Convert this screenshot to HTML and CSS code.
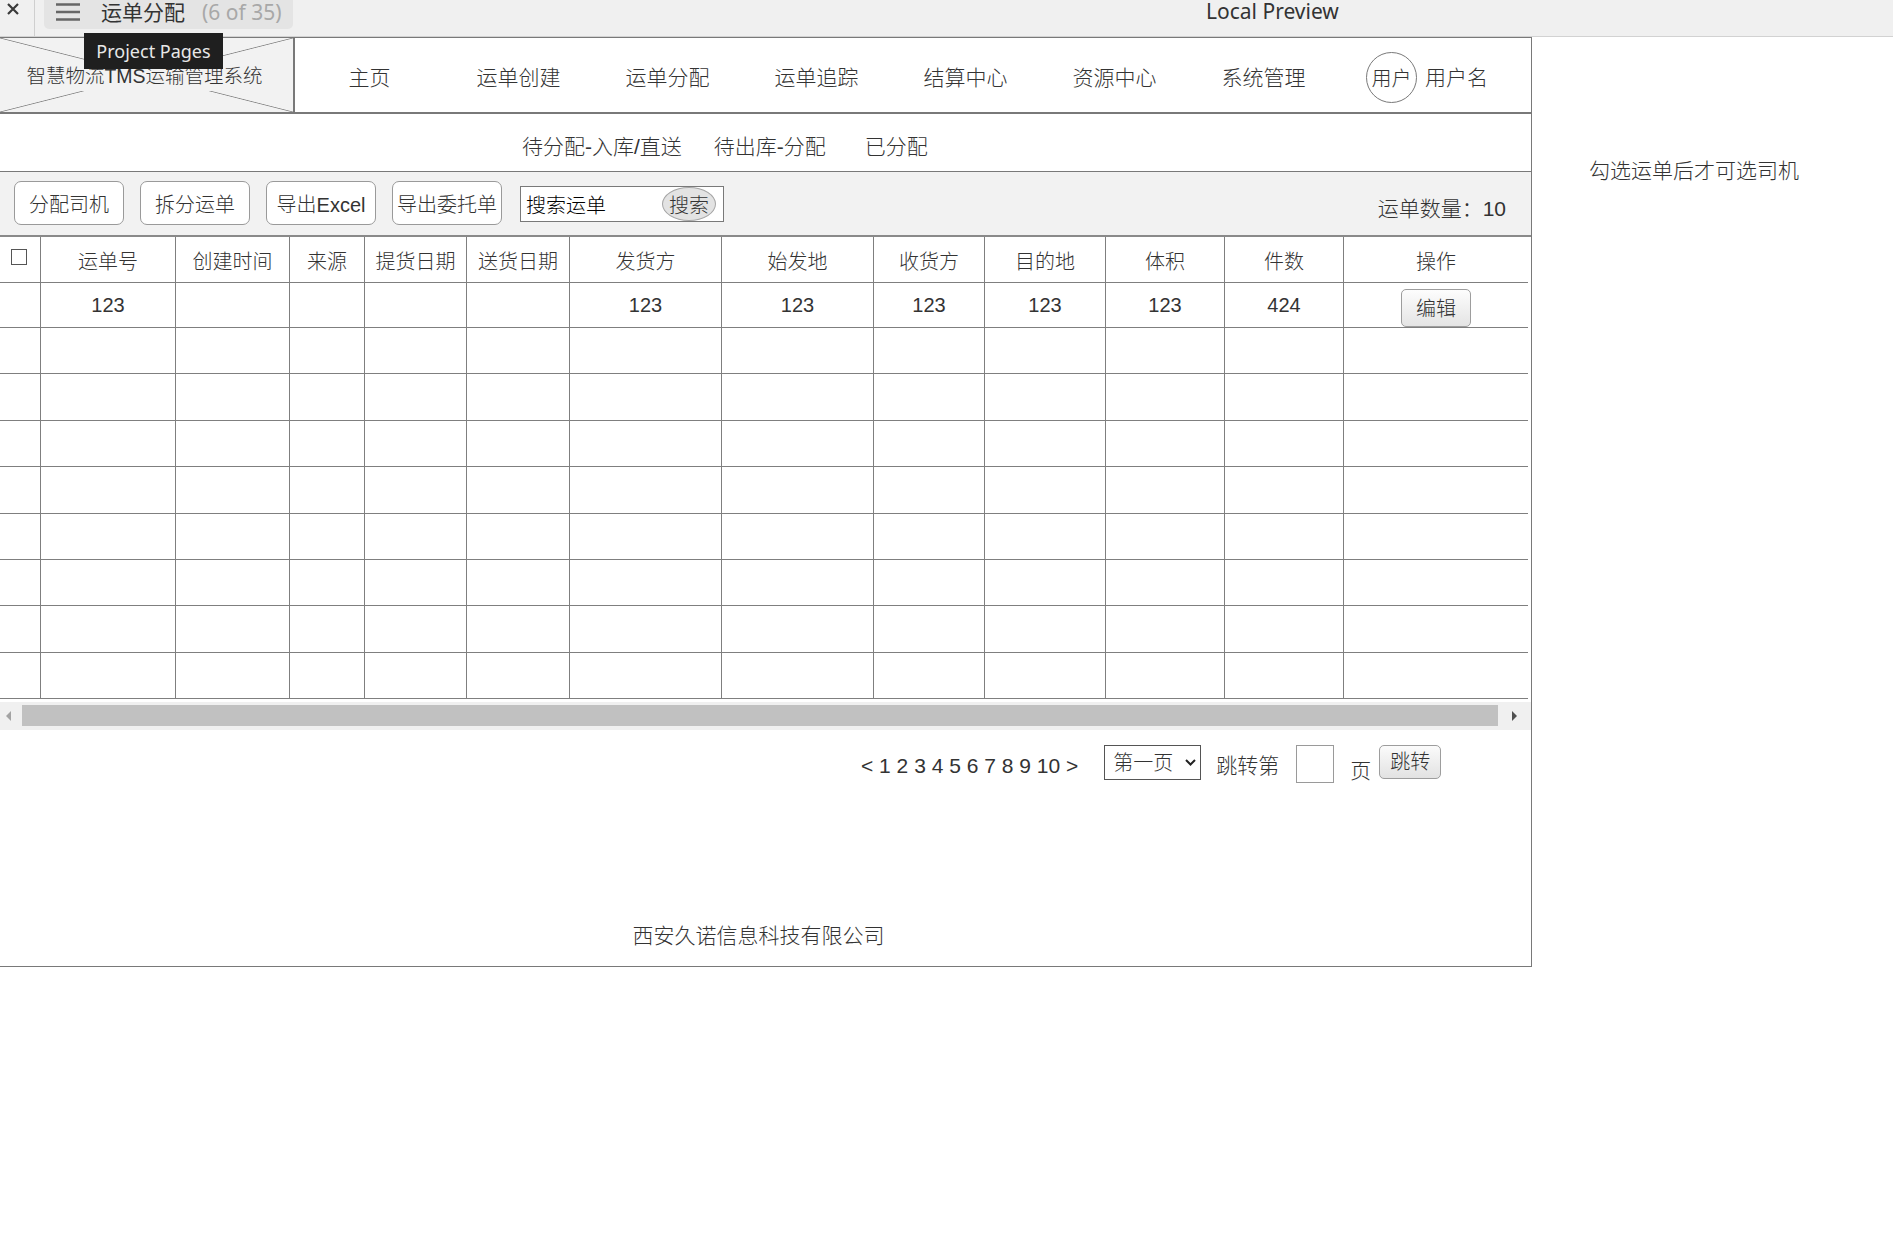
FILE: index.html
```html
<!DOCTYPE html>
<html lang="zh-CN">
<head>
<meta charset="utf-8">
<title>运单分配</title>
<link rel="stylesheet" href="styles.css">
</head>
<body>
<div class="topbar">
  <div class="tb-close">
    <svg width="12" height="12" viewBox="0 0 12 12"><path d="M1 1 L11 11 M11 1 L1 11" stroke="#3a3a3a" stroke-width="2.2" fill="none"/></svg>
  </div>
  <div class="tb-pill">
    <svg class="tb-menu" width="24" height="20" viewBox="0 0 24 20"><path d="M0 2.5 H24 M0 10 H24 M0 17.5 H24" stroke="#666" stroke-width="2.6" fill="none"/></svg>
    <span class="tb-title">运单分配</span>
    <span class="tb-count">(6 of 35)</span>
  </div>
  <span class="tb-preview">Local Preview</span>
</div>

<div class="tooltip">Project Pages</div>

<div class="page">
  <div class="frame">
    <header class="header">
      <div class="logo"><span class="logo-label">智慧物流TMS运输管理系统</span></div>
      <nav class="nav">
        <span class="nav-item">主页</span>
        <span class="nav-item">运单创建</span>
        <span class="nav-item">运单分配</span>
        <span class="nav-item">运单追踪</span>
        <span class="nav-item">结算中心</span>
        <span class="nav-item">资源中心</span>
        <span class="nav-item">系统管理</span>
        <span class="avatar">用户</span>
        <span class="username">用户名</span>
      </nav>
    </header>

    <div class="subtabs">
      <span class="subtab">待分配-入库/直送</span>
      <span class="subtab">待出库-分配</span>
      <span class="subtab subtab-last">已分配</span>
    </div>

    <div class="toolbar">
      <span class="btn">分配司机</span>
      <span class="btn">拆分运单</span>
      <span class="btn">导出Excel</span>
      <span class="btn">导出委托单</span>
      <div class="search">
        <span class="search-text">搜索运单</span>
        <span class="search-btn">搜索</span>
      </div>
      <span class="count">运单数量：10</span>
    </div>

    <div class="table-wrap">
      <table class="grid">
        <colgroup>
          <col class="c1"><col class="c2"><col class="c3"><col class="c4"><col class="c5"><col class="c6"><col class="c7"><col class="c8"><col class="c9"><col class="c10"><col class="c11"><col class="c12"><col class="c13">
        </colgroup>
        <thead>
          <tr>
            <th class="chk"><span class="checkbox"></span></th>
            <th>运单号</th><th>创建时间</th><th>来源</th><th>提货日期</th><th>送货日期</th><th>发货方</th><th>始发地</th><th>收货方</th><th>目的地</th><th>体积</th><th>件数</th><th class="last">操作</th>
          </tr>
        </thead>
        <tbody>
          <tr class="first">
            <td></td><td>123</td><td></td><td></td><td></td><td></td><td>123</td><td>123</td><td>123</td><td>123</td><td>123</td><td>424</td><td class="last op"><span class="edit-btn">编辑</span></td>
          </tr>
          <tr><td></td><td></td><td></td><td></td><td></td><td></td><td></td><td></td><td></td><td></td><td></td><td></td><td class="last"></td></tr>
          <tr><td></td><td></td><td></td><td></td><td></td><td></td><td></td><td></td><td></td><td></td><td></td><td></td><td class="last"></td></tr>
          <tr><td></td><td></td><td></td><td></td><td></td><td></td><td></td><td></td><td></td><td></td><td></td><td></td><td class="last"></td></tr>
          <tr><td></td><td></td><td></td><td></td><td></td><td></td><td></td><td></td><td></td><td></td><td></td><td></td><td class="last"></td></tr>
          <tr><td></td><td></td><td></td><td></td><td></td><td></td><td></td><td></td><td></td><td></td><td></td><td></td><td class="last"></td></tr>
          <tr><td></td><td></td><td></td><td></td><td></td><td></td><td></td><td></td><td></td><td></td><td></td><td></td><td class="last"></td></tr>
          <tr><td></td><td></td><td></td><td></td><td></td><td></td><td></td><td></td><td></td><td></td><td></td><td></td><td class="last"></td></tr>
          <tr><td></td><td></td><td></td><td></td><td></td><td></td><td></td><td></td><td></td><td></td><td></td><td></td><td class="last"></td></tr>
        </tbody>
      </table>
      <div class="hscroll">
        <span class="arrow-l"><span class="tri-l"></span></span>
        <span class="thumb"></span>
        <span class="arrow-r"><span class="tri-r"></span></span>
      </div>
    </div>

    <div class="pager">
      <span class="pages">&lt; 1 2 3 4 5 6 7 8 9 10 &gt;</span>
      <span class="select">第一页<svg class="chev" width="11" height="7" viewBox="0 0 11 7"><path d="M1 1 L5.5 5.5 L10 1" stroke="#222" stroke-width="2" fill="none"/></svg></span>
      <span class="jump-label">跳转第</span>
      <span class="jump-input"></span>
      <span class="jump-unit">页</span>
      <span class="jump-btn">跳转</span>
    </div>

    <footer class="footer">西安久诺信息科技有限公司</footer>
  </div>
  <div class="hint">勾选运单后才可选司机</div>
</div>
</body>
</html>
```

FILE: styles.css
```css
* { box-sizing: border-box; }
html, body { margin: 0; padding: 0; background: #fff; }
body {
  font-family: "Liberation Sans", "Noto Sans CJK SC", sans-serif;
  font-weight: 300;
  color: #333;
  width: 1893px;
  height: 1245px;
  overflow: hidden;
  position: relative;
}

/* ---------- top bar ---------- */
.topbar {
  display: flex;
  align-items: flex-start;
  height: 37px;
  background: #f0f0f0;
  border-bottom: 1px solid #d2d2d2;
  font-family: "Noto Sans", "Noto Sans CJK SC", sans-serif;
  font-weight: 400;
}
.tb-close {
  width: 35px;
  height: 36px;
  border-right: 1px solid #cfcfcf;
  padding: 3px 0 0 7px;
}
.tb-close svg { display: block; }
.tb-pill {
  margin-left: 9px;
  width: 249px;
  height: 29px;
  background: #e4e4e4;
  border-radius: 0 0 5px 5px;
  display: flex;
  align-items: flex-start;
  padding-left: 12px;
}
.tb-menu { margin-top: 2px; display: block; }
.tb-title { margin-left: 21px; font-size: 21px; line-height: 25px; color: #333; }
.tb-count { margin-left: 17px; font-size: 21px; line-height: 25px; color: #a8a8a8; }
.tb-preview { margin-left: 913px; font-size: 21px; line-height: 23px; color: #333; }

.tooltip {
  position: absolute;
  left: 84px;
  top: 33px;
  width: 139px;
  height: 36px;
  background: #1f1f1f;
  color: #e8e8e8;
  font-family: "Noto Sans", sans-serif;
  font-weight: 400;
  font-size: 18px;
  line-height: 36px;
  text-align: center;
  z-index: 5;
}

/* ---------- page frame ---------- */
.page { display: flex; align-items: flex-start; }
.frame {
  width: 1532px;
  flex: none;
  border-top: 1px solid #797979;
  border-right: 1px solid #797979;
  border-bottom: 1px solid #797979;
}

.header {
  display: flex;
  height: 76px;
  border-bottom: 2px solid #797979;
}
.logo {
  width: 295px;
  flex: none;
  border-right: 2px solid #797979;
  background:
    linear-gradient(to top right, transparent calc(50% - 0.8px), #8a8a8a 50%, transparent calc(50% + 0.8px)),
    linear-gradient(to bottom right, transparent calc(50% - 0.8px), #8a8a8a 50%, transparent calc(50% + 0.8px)),
    #f2f2f2;
  display: flex;
  align-items: center;
  justify-content: center;
  padding-right: 4px;
}
.logo-label {
  background: #f2f2f2;
  font-size: 19.5px;
  line-height: 30px;
  color: #333;
  white-space: nowrap;
  margin-top: 1px;
}
.nav {
  display: flex;
  align-items: center;
  flex: 1;
}
.nav-item {
  width: 149px;
  text-align: center;
  font-size: 21px;
  line-height: 28px;
  padding-top: 5px;
  color: #333;
}
.avatar {
  margin-left: 28px;
  margin-top: 4px;
  width: 51px;
  height: 51px;
  border: 1px solid #797979;
  border-radius: 50%;
  display: flex;
  align-items: center;
  justify-content: center;
  font-size: 20px;
}
.username {
  margin-left: 8px;
  font-size: 21px;
  line-height: 28px;
  padding-top: 5px;
}

.subtabs {
  height: 58px;
  border-bottom: 1px solid #797979;
  display: flex;
  gap: 32px;
  padding: 19px 0 0 522px;
  font-size: 21px;
  line-height: 28px;
}
.subtab-last { margin-left: 7px; }

.toolbar {
  height: 63px;
  background: #f2f2f2;
  display: flex;
  align-items: flex-start;
  padding: 9px 25px 0 14px;
}
.btn {
  width: 110px;
  height: 44px;
  margin-right: 16px;
  border: 1px solid #9a9a9a;
  border-radius: 7px;
  background: #fff;
  font-size: 20px;
  display: flex;
  align-items: center;
  justify-content: center;
  white-space: nowrap;
}
.search {
  margin-left: 2px;
  margin-top: 5px;
  width: 204px;
  height: 36px;
  border: 1px solid #797979;
  background: #fff;
  display: flex;
  align-items: center;
  padding-left: 5px;
}
.search-text { font-size: 20px; color: #000; }
.search-btn {
  margin-left: auto;
  margin-right: 7px;
  width: 54px;
  height: 34px;
  border: 1px solid #a6a6a6;
  border-radius: 50%;
  background: #e3e3e3;
  font-size: 20px;
  display: flex;
  align-items: center;
  justify-content: center;
}
.count {
  margin-left: auto;
  margin-top: 14px;
  font-size: 21px;
  line-height: 28px;
}

/* ---------- table ---------- */
.table-wrap { border-top: 2px solid #8a8a8a; }
.grid {
  width: 1528px;
  table-layout: fixed;
  border-collapse: separate;
  border-spacing: 0;
  font-size: 20px;
  color: #333;
}
.grid .c1 { width: 41px; }
.grid .c2 { width: 135px; }
.grid .c3 { width: 114px; }
.grid .c4 { width: 75px; }
.grid .c5 { width: 102px; }
.grid .c6 { width: 103px; }
.grid .c7 { width: 152px; }
.grid .c8 { width: 152px; }
.grid .c9 { width: 111px; }
.grid .c10 { width: 121px; }
.grid .c11 { width: 119px; }
.grid .c12 { width: 119px; }
.grid .c13 { width: 184px; }
.grid th, .grid td {
  border-right: 1px solid #7f7f7f;
  border-bottom: 1px solid #7f7f7f;
  padding: 0;
  text-align: center;
  vertical-align: middle;
  font-weight: 300;
  white-space: nowrap;
}
.grid .last { border-right: none; }
.grid thead tr { height: 46px; }
.grid th { padding-top: 2px; }
.grid th.chk { vertical-align: top; padding-top: 10px; }
.checkbox {
  display: inline-block;
  width: 16px;
  height: 16px;
  border: 1px solid #555;
  background: #fff;
  margin-right: 3px;
}
.grid tbody tr { height: 46.4px; }
.grid tbody tr.first { height: 45px; }
.grid td.op { padding-top: 5px; }
.edit-btn {
  display: inline-flex;
  align-items: center;
  justify-content: center;
  width: 70px;
  height: 38px;
  border: 1px solid #9d9d9d;
  border-radius: 5px;
  background: linear-gradient(#fdfdfd, #e4e4e4);
}

.hscroll {
  margin-top: 3px;
  height: 28px;
  background: #f0f0f0;
  display: flex;
  align-items: center;
}
.arrow-l { width: 22px; display: flex; justify-content: center; padding-right: 6px; }
.tri-l {
  width: 0; height: 0;
  border-top: 5px solid transparent;
  border-bottom: 5px solid transparent;
  border-right: 5px solid #a3a3a3;
}
.thumb { flex: 1; height: 21px; background: #c1c1c1; margin-top: -1px; }
.arrow-r { width: 33px; display: flex; justify-content: center; }
.tri-r {
  width: 0; height: 0;
  border-top: 5px solid transparent;
  border-bottom: 5px solid transparent;
  border-left: 5px solid #505050;
}

/* ---------- pager ---------- */
.pager {
  display: flex;
  align-items: flex-start;
  margin-top: 15px;
  height: 38px;
  padding-left: 861px;
  font-size: 21px;
  line-height: 28px;
}
.pages { margin-top: 7px; white-space: nowrap; }
.select {
  margin-left: 26px;
  width: 97px;
  height: 35px;
  border: 1px solid #555;
  background: #fff;
  display: flex;
  align-items: center;
  padding-left: 8px;
  font-size: 20px;
}
.chev { margin-left: auto; margin-right: 4px; }
.jump-label { margin-left: 15px; margin-top: 7px; }
.jump-input {
  margin-left: 17px;
  width: 38px;
  height: 38px;
  border: 1px solid #9a9a9a;
  background: #fff;
}
.jump-unit { margin-left: 16px; margin-top: 12px; }
.jump-btn {
  margin-left: 8px;
  width: 62px;
  height: 34px;
  border: 1px solid #9d9d9d;
  border-radius: 5px;
  background: linear-gradient(#fbfbfb, #e2e2e2);
  font-size: 20px;
  display: flex;
  align-items: center;
  justify-content: center;
}

.footer {
  margin-top: 139px;
  padding: 0 14px 16px 0;
  text-align: center;
  font-size: 21px;
  line-height: 28px;
}

.hint {
  margin-left: 57px;
  margin-top: 120px;
  font-size: 21px;
  line-height: 28px;
  white-space: nowrap;
}
```
